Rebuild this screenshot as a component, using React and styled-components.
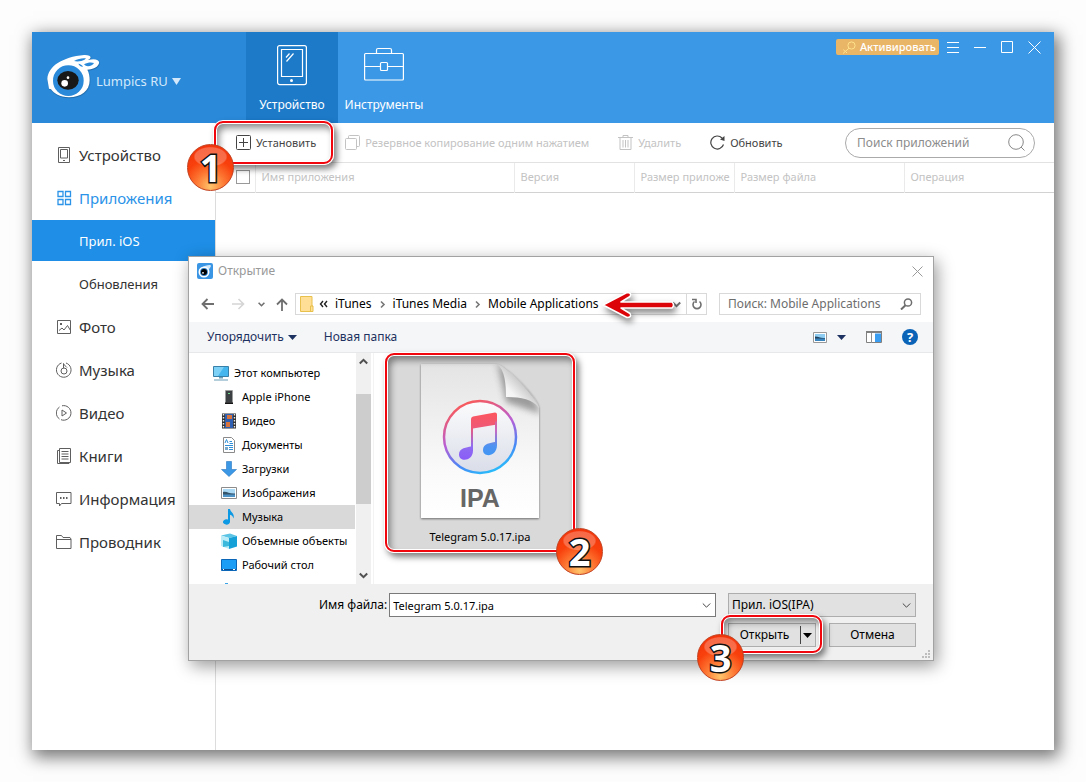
import React, { useState } from 'react'
import styled, { createGlobalStyle, css } from 'styled-components'

const GlobalStyle = createGlobalStyle`
 * {
  box-sizing: border-box;
 }
 body {
  margin: 0;
  background: #fdfdfd;
  font-family: 'Noto Sans', 'Open Sans', sans-serif;
  font-size: 12px;
  line-height: 16px;
 }
 button, input, select {
  font: inherit;
  color: inherit;
  margin: 0;
  padding: 0;
  border: none;
  border-radius: 0;
  background: none;
  outline: none;
 }
 svg {
  display: block;
  flex: none;
 }
`

const Page = styled.div`
 padding: 32px;
`

const Window = styled.div`
 position: relative;
 display: flex;
 flex-direction: column;
 min-height: calc(100vh - 64px);
 background: #fff;
 box-shadow: 3px 5px 16px 2px rgba(0, 0, 0, 0.55);
`

const Header = styled.header`
 display: flex;
 height: 91px;
 background: #3b98e6;
 color: #fff;
`

const Brand = styled.button`
 display: flex;
 align-items: center;
 width: 214px;
 padding-left: 14px;
 background: #2a89d9;
 color: #d3e8fa;
 font-size: 13px;

 span {
  margin-top: 7px;
  margin-left: -4px;
 }
 svg + span + svg {
  margin: 7px 0 0 4px;
 }
`

const Tab = styled.button`
 display: flex;
 flex-direction: column;
 align-items: center;
 justify-content: space-between;
 width: 92px;
 padding: 12px 0 9px;
 line-height: 18px;
 white-space: nowrap;
 background: ${(props) => (props.$active ? '#1c7ac9' : 'transparent')};
`

const WindowControls = styled.div`
 display: flex;
 align-items: center;
 gap: 14px;
 height: 30px;
 margin-left: auto;
 padding-right: 13px;
`

const ActivateButton = styled.button`
 display: flex;
 align-items: center;
 gap: 4px;
 height: 16px;
 margin-right: -6px;
 padding: 0 3px 0 6px;
 border-radius: 2px;
 background: #e9b567;
 font-size: 11px;
 font-weight: 500;
 line-height: 14px;
 white-space: nowrap;
`

const Body = styled.div`
 display: flex;
 flex: 1;
`

const Sidebar = styled.nav`
 display: flex;
 flex-direction: column;
 gap: 2px;
 width: 184px;
 padding-top: 11px;
 border-right: 1px solid #dcdcdc;
`

const SideLink = styled.a`
 display: flex;
 align-items: center;
 gap: 7px;
 height: 41px;
 padding-left: 24px;
 font-size: 15px;
 color: #333;
 text-decoration: none;
 white-space: nowrap;

 svg {
  color: #5f5f5f;
 }

 ${(props) =>
  props.$open &&
  css`
   &,
   svg {
    color: #2b93e8;
   }
  `}
 ${(props) =>
  props.$sub &&
  css`
   padding-left: 47px;
   font-size: 13px;
  `}
 ${(props) =>
  props.$active &&
  css`
   background: #1e8ee6;
   color: #fff;
  `}
`

const Main = styled.main`
 flex: 1;
 min-width: 0;
`

const Toolbar = styled.div`
 display: flex;
 align-items: center;
 gap: 29px;
 height: 40px;
 padding: 0 19px 0 20px;
 border-bottom: 1px solid #e2e2e2;
`

const ToolButton = styled.button`
 position: relative;
 display: flex;
 align-items: center;
 gap: 5px;
 color: #444;
 font-size: 11px;
 white-space: nowrap;

 &:disabled {
  color: #c3c3c3;
 }
`

const AppSearch = styled.label`
 display: flex;
 align-items: center;
 width: 190px;
 height: 30px;
 margin-left: auto;
 padding: 0 9px 0 11px;
 border: 1px solid #aaa;
 border-radius: 15px;
 color: #888;

 input {
  flex: 1;
  min-width: 0;
 }
 input::placeholder {
  color: #8c8c8c;
  opacity: 1;
 }
`

const AppTable = styled.table`
 width: 100%;
 table-layout: fixed;
 border-collapse: collapse;
 border-bottom: 1px solid #d2d2d2;
 color: #c3c3c3;
 font-size: 11px;
`

const HeadCell = styled.th`
 width: ${(props) => props.$width || 'auto'};
 height: 29px;
 padding: 0 0 0 6px;
 border-left: 1px solid #eaeaea;
 font-weight: 400;
 text-align: left;
 white-space: nowrap;

 &:first-child {
  padding-left: 20px;
  border-left: none;
 }
`

const Checkbox = styled.input`
 display: block;
 appearance: none;
 width: 14px;
 height: 14px;
 border: 1px solid #999;
`

/* file dialog */

const Dialog = styled.section`
 position: absolute;
 z-index: 2;
 top: 224px;
 left: 156px;
 right: 120px;
 border: 1px solid #a2a2a2;
 background: #fff;
 color: #000;
 box-shadow: 3px 5px 16px rgba(0, 0, 0, 0.4);
`

const TitleBar = styled.div`
 display: flex;
 align-items: center;
 gap: 5px;
 height: 28px;
 padding: 0 10px 0 8px;
 color: #999;

 button {
  margin-left: auto;
 }
`

const NavRow = styled.div`
 display: flex;
 height: 37px;
 padding: 8px 12px 7px 4px;
`

const NavButton = styled.button`
 display: flex;
 align-items: center;
 justify-content: center;
 width: ${(props) => props.$width};
 color: #6f6f6f;

 &:disabled {
  color: #d5d5d5;
 }
`

const AddressBar = styled.div`
 display: flex;
 align-items: center;
 flex: 1;
 min-width: 0;
 padding-left: 4px;
 border: 1px solid #d9d9d9;
 white-space: nowrap;
`

const Crumbs = styled.div`
 position: relative;
 display: flex;
 align-items: center;
 gap: 7px;
 margin-right: auto;
 padding-left: 5px;

 a {
  color: #000;
  text-decoration: none;
 }
`

const PointerArrow = styled.svg`
 position: absolute;
 top: -5px;
 left: 100%;
 margin-left: 2px;
 filter: drop-shadow(2px 4px 3px rgba(0, 0, 0, 0.5));
`

const RefreshButton = styled(NavButton)`
 height: 20px;
 border-left: 1px solid #d9d9d9;
`

const FileSearch = styled.label`
 display: flex;
 align-items: center;
 width: 202px;
 margin-left: 12px;
 padding: 0 7px 0 8px;
 border: 1px solid #d9d9d9;
 color: #6d6d6d;

 input {
  flex: 1;
  min-width: 0;
 }
 input::placeholder {
  color: #6d6d6d;
  opacity: 1;
 }
`

const CommandBar = styled.div`
 display: flex;
 align-items: center;
 height: 31px;
 padding: 0 15px 0 18px;
 border-bottom: 1px solid #e6e8ea;
 background: #f5f6f7;
 color: #1e3261;
`

const Command = styled.button`
 display: flex;
 align-items: center;
 gap: 4px;
 margin-right: 27px;
`

const ViewTools = styled.div`
 display: flex;
 align-items: center;
 gap: 20px;
 margin-left: auto;
`

const ViewButton = styled.button`
 display: flex;
 align-items: center;
 gap: 10px;
`

const Browser = styled.div`
 display: flex;
 height: 231px;
`

const Tree = styled.ul`
 width: 166px;
 margin: 0 1px 0 0;
 padding: 8px 0 0;
 overflow: hidden;
 list-style: none;
 font-size: 11px;
`

const TreeItem = styled.li`
 display: flex;
 align-items: center;
 gap: 5px;
 height: 24px;
 padding-left: ${(props) => (props.$root ? '24px' : '32px')};
 background: ${(props) => (props.$selected ? '#d9d9d9' : 'transparent')};
 white-space: nowrap;
`

const Scrollbar = styled.div`
 display: flex;
 flex-direction: column;
 align-items: center;
 width: 15px;
 padding: 5px 0;
 background: #f0f0f0;
 color: #505050;
`

const Thumb = styled.div`
 width: 100%;
 height: 110px;
 margin: 29px 0 auto;
 background: #cdcdcd;
`

const FileList = styled.div`
 flex: 1;
 margin-left: 2px;
 padding: 3px 0 0 14px;
 border-left: 1px solid #f3f3f3;
`

const FileTile = styled.button`
 position: relative;
 display: flex;
 flex-direction: column;
 align-items: center;
 gap: 7px;
 width: 184px;
 height: 193px;
 padding-top: 6px;
 background: #d9d9d9;
 font-size: 11px;
`

const Footer = styled.form`
 display: flex;
 flex-direction: column;
 gap: 6px;
 position: relative;
 height: 76px;
 padding: 9px 17px 13px 130px;
 background: #f0f0f0;
`

const FooterRow = styled.div`
 display: flex;
 align-items: center;
 justify-content: flex-end;
 height: 24px;
`

const Field = styled.div`
 display: flex;
 align-items: center;
 gap: 2px;
 height: 24px;
 padding-right: 4px;
 border: 1px solid #7a7a7a;
 background: #fff;

 input, select {
  flex: 1;
  min-width: 0;
  height: 100%;
  padding-left: 3px;
  appearance: none;
 }
`

const NameField = styled(Field)`
 flex: 1;
 margin: 0 12px 0 2px;
 font-size: 11px;
`

const TypeField = styled(Field)`
 width: 188px;
 border-color: #adadad;
 background: #e1e1e1;
`

const DialogButton = styled.button`
 height: 24px;
 width: 87px;
 border: 1px solid #adadad;
 background: #e1e1e1;
`

const SplitButton = styled.div`
 position: relative;
 display: flex;
 width: 88px;
 height: 24px;
 margin-right: 13px;
 border: 1px solid #adadad;
 background: #e1e1e1;

 button:first-child {
  flex: 1;
  margin: 2px 0;
  border-right: 1px solid #444;
 }
 button + button {
  width: 14px;
  padding-left: 2px;
 }
`

const Grip = styled.svg`
 position: absolute;
 right: 2px;
 bottom: 1px;
`

/* callouts */

const Callout = styled.span`
 position: absolute;
 z-index: 3;
 inset: ${(props) => props.$inset};
 border: 2px solid #fff;
 border-radius: 10px;
 box-shadow: 3px 4px 6px rgba(0, 0, 0, 0.5);
 pointer-events: none;

 &::before {
  content: '';
  position: absolute;
  inset: -1px;
  border: 2px solid #f0060c;
  border-radius: 9px;
  box-shadow: inset 0 0 0 1px #fff, inset 3px 5px 7px rgba(0, 0, 0, 0.45);
 }
`

const Badge = styled.b`
 position: absolute;
 left: ${(props) => props.$left};
 bottom: ${(props) => props.$bottom};
 width: 47px;
 height: 47px;
 border: 1px solid #c2401f;
 border-radius: 50%;
 background:
  radial-gradient(ellipse 17px 10px at 50% 26%, rgba(255, 255, 255, 0.25) 90%, transparent),
  radial-gradient(circle at 50% 92%, #ffc56b 0, #fd7a35 30%, #f8400c 58%, #f2300a 100%);
 color: #fff;
 font-size: 38px;
 line-height: 44px;
 text-align: center;
 -webkit-text-stroke: 3px #111;
 paint-order: stroke fill;
`

const Stroke = ({ size = 16, width, height, children, ...rest }) => (
 <svg
  width={width || size}
  height={height || size}
  viewBox={`0 0 ${width || size} ${height || size}`}
  fill="none"
  stroke="currentColor"
  {...rest}
 >
  {children}
 </svg>
)

const Caret = () => (
 <svg width="9" height="5" viewBox="0 0 9 5" fill="currentColor">
  <path d="M0 0h9L4.500 5z" />
 </svg>
)

const Chevron = ({ up, bold }) => (
 <Stroke width={9} height={7} strokeWidth={bold ? 2 : 1} color={bold ? undefined : '#444'}>
  <path d={up ? 'M.8 5.500L4.500 1.800l3.700 3.700' : 'M.8 1.500L4.500 5.200l3.700-3.700'} />
 </Stroke>
)

const Separator = () => (
 <Stroke width={7} height={9} strokeWidth={1.6} color="#777">
  <path d="M2 1.500l3 3-3 3" />
 </Stroke>
)

const Logo = () => (
 <svg width="54" height="46" viewBox="6 28 162 138">
  <g style={{ filter: 'drop-shadow(1px 2px 1px rgba(0,0,0,.3))' }}>
   <path
    d="M10 100C12 62 55 34 120 28c22-1 25 9 12 15 24-6 38 1 32 13-6 11-20 16-34 16 5 9 7 20 7 32 0 32-26 51-62 51-28 0-45-12-54-24l-6-2z"
    fill="#fff"
   />
  </g>
  <path d="M90 46c12-7 24-9 35-8 2 2-4 6-13 8-8 2-15 2-22 0z" fill="#2a89d9" />
  <path d="M120 56c11-6 22-7 30-4-2 5-11 9-18 10-5 0-9-2-12-6z" fill="#2a89d9" />
  <path d="M103 54c6 0 11 4 14 9-5 1-11-2-14-9z" fill="#2a89d9" />
  <circle cx="73" cy="105" r="46" fill="#2a89d9" />
  <ellipse cx="72" cy="104" rx="32" ry="28" fill="#181818" />
  <circle cx="62" cy="113" r="10" fill="#fff" />
  <circle cx="72" cy="96" r="4" fill="#fff" />
 </svg>
)

const MiniLogo = () => (
 <svg width="16" height="16" viewBox="0 0 16 16">
  <rect width="16" height="16" rx="2" fill="#3a95e4" />
  <path d="M2 9C2 5 7 2.500 12.500 2c2 0 1.500 1.500 1 2-.5 1.500-2 2-2.500 2.500z" fill="#cfe8fb" />
  <circle cx="7" cy="9" r="5.500" fill="#fff" />
  <circle cx="7" cy="9" r="3.900" fill="#2d7fc8" />
  <circle cx="7" cy="9" r="3" fill="#000" />
  <circle cx="6" cy="9.800" r=".9" fill="#fff" />
 </svg>
)

const TabletIcon = () => (
 <Stroke width={30} height={42} strokeWidth={1.2}>
  <rect x=".6" y="1.600" width="28.800" height="39" rx="2" />
  <path d="M4.500 5.500h21v27h-21zM9 13.500l3.500-4M9.500 17.500l7-8" />
  <circle cx="14.500" cy="36.500" r="1.500" fill="currentColor" stroke="none" />
 </Stroke>
)

const BriefcaseIcon = () => (
 <Stroke width={40} height={42} strokeWidth={1.2}>
  <rect x=".6" y="9.500" width="38.800" height="26.500" rx="1" />
  <path d="M12.500 9.500V6q0-1.500 1.500-1.500h12q1.500 0 1.500 1.500v3.500M.6 22.500h15.900M23.500 22.500h15.900" />
  <rect x="16.500" y="18.500" width="7" height="8" rx="1" />
 </Stroke>
)

const KeyIcon = () => (
 <Stroke width={14} height={13} color="#ffe38c">
  <circle cx="9.500" cy="4.500" r="3.600" />
  <path d="M7 7.200L1 12.500M3.500 10.500l1.500 1.500M1.500 8.500l1.500 2" />
 </Stroke>
)

const sideIcons = {
 device: (
  <Stroke>
   <path d="M2.500.5h11v15h-11zM4.500 2.500h7v8.500h-7zM7 13.500h2" />
  </Stroke>
 ),
 apps: (
  <Stroke strokeWidth="1.300">
   <path d="M2 1.500h5v5H2zM9.500 1.500h5v5h-5zM2 9.500h5v5H2zM9.500 9.500h5v5h-5z" />
  </Stroke>
 ),
 photo: (
  <Stroke>
   <path d="M1.500 1.500h13v13h-13zM3 11.500l3-2.500 2 2 3.500-4.500 3 5" />
   <path d="M4 5h2" strokeWidth="2" />
  </Stroke>
 ),
 music: (
  <Stroke>
   <path d="M5.500 1A7.300 7.300 0 1 0 10 1" />
   <circle cx="8" cy="9" r="3" />
   <path d="M7.500 6V1.500c.5 2 2.500 2.500 3.500 4" />
  </Stroke>
 ),
 video: (
  <Stroke>
   <path d="M6 .8A7.300 7.300 0 1 1 5 14.700M3.500 14A7.300 7.300 0 0 1 3.500 2M6 5v6l4.500-3z" />
  </Stroke>
 ),
 books: (
  <Stroke>
   <path d="M3.500.5h11v14h-11zM3.500 2.500h-2v13h11.500v-1M5.500 3.500h7M5.500 6h7M5.500 8.500h7M5.500 11h7" />
  </Stroke>
 ),
 info: (
  <Stroke>
   <path d="M.5 1.500h14.500v11H5.500l-2 2.500v-2.500h-3z" />
   <path d="M4 7h1.500M7 7h1.500M10 7h1.500" strokeWidth="1.800" />
  </Stroke>
 ),
 explorer: (
  <Stroke>
   <path d="M.5 14.500v-13h5l1.500 2h7l1 1.500v9.500zM.5 5.500h14.500" />
  </Stroke>
 ),
}

const treeIcons = {
 computer: (
  <svg width="16" height="16" viewBox="0 0 16 16">
   <path d="M.5 1.500h15v10H.5z" fill="#45b6ee" stroke="#3980a8" />
   <path d="M1 2h10l-6 9H1z" fill="#7dd1f7" />
   <path d="M6 12h4v1.500H6zM1 14.500h14v1H1z" fill="#6aa0b8" />
  </svg>
 ),
 phone: (
  <svg width="16" height="16" viewBox="0 0 16 16">
   <path d="M4.500 1.500h7V14h-7z" fill="#3d4043" stroke="#999" strokeWidth=".6" />
   <path d="M4 13.500h8V15H4z" fill="#151515" />
   <path d="M7 4h2v1H7z" fill="#6fdc8a" />
  </svg>
 ),
 video: (
  <svg width="16" height="16" viewBox="0 0 16 16">
   <path d="M1 .5h14v15H1z" fill="#333" />
   <path d="M4 1h8v14H4z" fill="#2e5fb0" />
   <path d="M6 2h5v4H6zM5 9h4v5H5z" fill="#d8743c" />
   <path d="M2.500 1v15M13.500 1v15" stroke="#eee" strokeWidth="1.400" strokeDasharray="1.500 1.500" />
  </svg>
 ),
 documents: (
  <svg width="16" height="16" viewBox="0 0 16 16">
   <path d="M2.500.5h8l3 3v12h-11z" fill="#fff" stroke="#8a8a8a" />
   <path d="M4 6l1.500-3.500L7 6M8.500 4.500H11M8.500 6.500H12M4 8.500h8M8 10.500h4M8 12.500h4" stroke="#2e8fd8" fill="none" />
   <path d="M4 10h3v3H4z" fill="#77aacc" />
  </svg>
 ),
 downloads: (
  <svg width="16" height="16" viewBox="0 0 16 16">
   <path d="M5.500.5h5v8h5L8 15.500.5 8.500h5z" fill="#3c97e5" stroke="#2877c0" strokeWidth=".6" />
  </svg>
 ),
 pictures: (
  <svg width="16" height="12" viewBox="0 0 16 12">
   <path d="M.5.500h15v11H.5z" fill="#fff" stroke="#8c8c8c" />
   <path d="M2 2h12v8H2z" fill="#a9d9f5" />
   <path d="M2 5c4-1 6 2 12 1.500V8H2z" fill="#35556b" />
   <path d="M2 7.500h12V10H2z" fill="#4d93c5" />
  </svg>
 ),
 music: (
  <svg width="16" height="16" viewBox="0 0 16 16">
   <path d="M7 0h2c.5 3.500 5 4 3.500 9.500-.5-2-1.500-3.200-3.500-3.800V13a3.500 2.700 0 1 1-2-2.500z" fill="#0d99e3" />
  </svg>
 ),
 objects: (
  <svg width="16" height="16" viewBox="0 0 16 16">
   <path d="M0 2.500L9 .5l7 2.500-8 2z" fill="#5cc4e4" />
   <path d="M0 2.500L8 5v11l-8-3z" fill="#b9ecf7" />
   <path d="M8 5l8-2v10.500L8 16z" fill="#16a0d8" />
   <path d="M2 7l6 2v4l-6 1z" fill="#3bb9dc" />
  </svg>
 ),
 desktop: (
  <svg width="16" height="12" viewBox="0 0 16 12">
   <path d="M.5.5h15v11H.5z" fill="#1b9df5" stroke="#0b66b8" />
   <path d="M1 10h14v1H1z" fill="#0a4d90" />
   <path d="M2 10h1v1H2zM12 10h2v1h-2z" fill="#fff" />
  </svg>
 ),
 disk: (
  <svg width="16" height="16" viewBox="0 0 16 16">
   <path d="M4 2h3v3H4z" fill="#3ba4e8" />
   <path d="M1 6h14v6H1z" fill="#9b9b9b" />
  </svg>
 ),
}

const PictureIcon = () => (
 <svg width="14" height="11" viewBox="0 0 14 11">
  <path d="M.5.500h13v10H.5z" fill="#fff" stroke="#999" />
  <path d="M2 2h10v7H2z" fill="#8fcdf2" />
  <path d="M2 4.500c4 0 5 2 10 1.500v1H2z" fill="#23435f" />
  <path d="M2 6.500h10V9H2z" fill="#3a84bd" />
 </svg>
)

const PreviewIcon = () => (
 <svg width="16" height="12" viewBox="0 0 16 12">
  <path d="M.5.500h15v11H.5z" fill="#fff" stroke="#808080" />
  <path d="M0 0h16v2H0z" fill="#808080" />
  <path d="M5.500 2v10" stroke="#909090" />
  <path d="M9 2.500h6V11H9z" fill="#3a9df0" />
 </svg>
)

const HelpIcon = () => (
 <svg width="16" height="16" viewBox="0 0 16 16">
  <circle cx="8" cy="8" r="8" fill="#0b63b8" />
  <text x="8" y="12.500" fill="#fff" fontSize="13" fontWeight="700" textAnchor="middle">
   ?
  </text>
 </svg>
)

const IpaIcon = () => (
 <svg width="122" height="160" viewBox="0 0 122 160">
  <defs>
   <linearGradient id="paper" x1="0" y1="0" x2="0" y2="1">
    <stop offset="0" stopColor="#e4e4e4" />
    <stop offset=".7" stopColor="#fafafa" />
    <stop offset="1" stopColor="#fff" />
   </linearGradient>
   <linearGradient id="ring" x1=".3" y1="0" x2=".7" y2="1">
    <stop offset="0" stopColor="#fb5a55" />
    <stop offset=".45" stopColor="#b75fd6" />
    <stop offset=".75" stopColor="#4a86f5" />
    <stop offset="1" stopColor="#25c0fb" />
   </linearGradient>
   <linearGradient id="note" gradientUnits="userSpaceOnUse" x1="62" y1="52" x2="62" y2="98">
    <stop offset="0" stopColor="#fb5660" />
    <stop offset=".3" stopColor="#ee5a78" />
    <stop offset=".7" stopColor="#8f6cf0" />
    <stop offset="1" stopColor="#8a5cf8" />
   </linearGradient>
   <linearGradient id="noteRight" gradientUnits="userSpaceOnUse" x1="72" y1="52" x2="72" y2="94">
    <stop offset="0" stopColor="#e6607c" />
    <stop offset=".4" stopColor="#c46ac4" />
    <stop offset=".75" stopColor="#4f92f0" />
    <stop offset="1" stopColor="#3f97f5" />
   </linearGradient>
   <linearGradient id="disc" x1="0" y1="0" x2="0" y2="1">
    <stop offset="0" stopColor="#fcfcfd" />
    <stop offset="1" stopColor="#d9dde8" />
   </linearGradient>
   <linearGradient id="curl" x1="0" y1="1" x2=".7" y2=".3">
    <stop offset="0" stopColor="#fff" />
    <stop offset=".5" stopColor="#f4f4f4" />
    <stop offset="1" stopColor="#b4b4b4" />
   </linearGradient>
   <filter id="soft" x="-20%" y="-20%" width="150%" height="150%">
    <feGaussianBlur stdDeviation="3" />
   </filter>
   <clipPath id="sheet">
    <path d="M2 2h76c10 2 42 34 42 44v110H2z" />
   </clipPath>
  </defs>
  <path
   d="M2 2h76c10 2 42 34 42 44v110H2z"
   fill="url(#paper)"
   style={{ filter: 'drop-shadow(0 1px 1px rgba(0,0,0,.5))' }}
  />
  <g clipPath="url(#sheet)">
   <path d="M78 0l9 40 35 12-10-22z" fill="#666" opacity=".6" filter="url(#soft)" />
  </g>
  <path d="M78 2c8 6 9 20 9 33 13 0 27 2 33 11-3-10-32-42-42-44z" fill="url(#curl)" />
  <circle cx="61" cy="75" r="36" fill="url(#disc)" stroke="url(#ring)" strokeWidth="2.500" />
  <path
   d="M52 57q0-2 2-2.500l22-4q2 0 2 2v10l-24 4v22c0 11-14 12-14 4 0-7 8-7 12-8z"
   fill="url(#note)"
  />
  <path d="M76 60l2-1v24c0 12-14 13-14 5 0-7 8-7 12-8z" fill="url(#noteRight)" />
  <text
   x="61"
   y="145"
   fill="#666"
   fontFamily="Liberation Sans, sans-serif"
   fontSize="25"
   fontWeight="700"
   textAnchor="middle"
  >
   IPA
  </text>
 </svg>
)

const menu = [
 { id: 'device', label: 'Устройство' },
 { id: 'apps', label: 'Приложения', open: true },
 { id: 'ios', label: 'Прил. iOS', sub: true, active: true },
 { id: 'updates', label: 'Обновления', sub: true },
 { id: 'photo', label: 'Фото' },
 { id: 'music', label: 'Музыка' },
 { id: 'video', label: 'Видео' },
 { id: 'books', label: 'Книги' },
 { id: 'info', label: 'Информация' },
 { id: 'explorer', label: 'Проводник' },
]

const places = [
 ['computer', 'Этот компьютер'],
 ['phone', 'Apple iPhone'],
 ['video', 'Видео'],
 ['documents', 'Документы'],
 ['downloads', 'Загрузки'],
 ['pictures', 'Изображения'],
 ['music', 'Музыка'],
 ['objects', 'Объемные объекты'],
 ['desktop', 'Рабочий стол'],
 ['disk', ''],
]

const OpenDialog = () => {
 const [fileName, setFileName] = useState('Telegram 5.0.17.ipa')

 return (
  <Dialog role="dialog" aria-label="Открытие">
   <TitleBar>
    <MiniLogo />
    <span>Открытие</span>
    <button aria-label="Закрыть">
     <Stroke size={11}>
      <path d="M.5.5l10 10M10.500.5l-10 10" />
     </Stroke>
    </button>
   </TitleBar>
   <NavRow>
    <NavButton $width="30px" aria-label="Назад">
     <Stroke width={14} height={12} strokeWidth={1.8}>
      <path d="M13 6H1.500M6.500 1l-5 5 5 5" />
     </Stroke>
    </NavButton>
    <NavButton $width="30px" aria-label="Вперед" disabled>
     <Stroke width={14} height={12} strokeWidth={1.6}>
      <path d="M1 6h11.500M7.500 1l5 5-5 5" />
     </Stroke>
    </NavButton>
    <NavButton $width="16px" aria-label="Последние">
     <Stroke width={7} height={5} strokeWidth={1.6}>
      <path d="M.6.8l2.900 2.900L6.400.8" />
     </Stroke>
    </NavButton>
    <NavButton $width="26px" aria-label="Вверх">
     <Stroke width={12} height={13} strokeWidth={1.8}>
      <path d="M6 13V1.500M1 6.500l5-5 5 5" />
     </Stroke>
    </NavButton>
    <AddressBar>
     <svg width="14" height="16" viewBox="0 0 14 16">
      <path d="M.5.500h11.500v9.500h1v5.500H.5z" fill="#ffdf95" stroke="#e8c04c" />
      <path d="M10.500 15.500v-5.500h2.500" fill="none" stroke="#e8c04c" />
     </svg>
     <Crumbs>
      <Stroke width={9} height={8} strokeWidth={1.4} color="#222">
       <path d="M4 1L1.500 4 4 7M8 1L5.500 4 8 7" />
      </Stroke>
      <a href="#itunes">iTunes</a>
      <Separator />
      <a href="#media">iTunes Media</a>
      <Separator />
      <a href="#apps">Mobile Applications</a>
      <PointerArrow width="74" height="28" viewBox="0 0 74 28">
       <path
        d="M2 14L26 1.500q5 0 3 4L20 11h51q3 3 0 6H20l9 5.500q2 4-3 4z"
        fill="#dc0409"
        stroke="#fff"
        strokeWidth="1.500"
        strokeLinejoin="round"
       />
      </PointerArrow>
     </Crumbs>
     <NavButton $width="20px" aria-label="Показать путь">
      <Chevron bold />
     </NavButton>
     <RefreshButton $width="20px" aria-label="Обновить папку">
      <Stroke width={10} height={12} strokeWidth={1.6}>
       <path d="M2.500 3.500A4 4 0 1 0 7.500 3.500M0 1.500h4v3.500" />
      </Stroke>
     </RefreshButton>
    </AddressBar>
    <FileSearch>
     <input type="text" placeholder="Поиск: Mobile Applications" aria-label="Поиск: Mobile Applications" />
     <Stroke width={13} height={12} strokeWidth={1.5}>
      <circle cx="8" cy="4.500" r="3.600" />
      <path d="M5.500 7.200L1 11.500" strokeWidth="2" />
     </Stroke>
    </FileSearch>
   </NavRow>
   <CommandBar>
    <Command>
     Упорядочить <Caret />
    </Command>
    <Command>Новая папка</Command>
    <ViewTools>
     <ViewButton aria-label="Вид">
      <PictureIcon />
      <Caret />
     </ViewButton>
     <ViewButton aria-label="Область просмотра">
      <PreviewIcon />
     </ViewButton>
     <ViewButton aria-label="Справка">
      <HelpIcon />
     </ViewButton>
    </ViewTools>
   </CommandBar>
   <Browser>
    <Tree>
     {places.map(([icon, label], index) => (
      <TreeItem key={icon} $root={index === 0} $selected={icon === 'music'}>
       {treeIcons[icon]}
       {label}
      </TreeItem>
     ))}
    </Tree>
    <Scrollbar>
     <Chevron up bold />
     <Thumb />
     <Chevron bold />
    </Scrollbar>
    <FileList>
     <FileTile>
      <IpaIcon />
      Telegram 5.0.17.ipa
      <Callout $inset="-4px">
       <Badge $left="170px" $bottom="-24px">
        2
       </Badge>
      </Callout>
     </FileTile>
    </FileList>
   </Browser>
   <Footer onSubmit={(e) => e.preventDefault()}>
    <FooterRow>
     <label htmlFor="file-name">Имя файла:</label>
     <NameField>
      <input id="file-name" type="text" value={fileName} onChange={(e) => setFileName(e.target.value)} />
      <Chevron />
     </NameField>
     <TypeField>
      <select aria-label="Тип файла">
       <option>Прил. iOS(IPA)</option>
      </select>
      <Chevron />
     </TypeField>
    </FooterRow>
    <FooterRow>
     <SplitButton>
      <button type="submit">Открыть</button>
      <button type="button" aria-label="Варианты открытия">
       <Caret />
      </button>
      <Callout $inset="-10px -8px -8px -9px">
       <Badge $left="-25px" $bottom="-29px">
        3
       </Badge>
      </Callout>
     </SplitButton>
     <DialogButton type="button">Отмена</DialogButton>
    </FooterRow>
    <Grip width="9" height="9" viewBox="0 0 9 9" fill="#bdbdbd">
     <path d="M6 0h2v2H6zM3 3h2v2H3zM6 3h2v2H6zM0 6h2v2H0zM3 6h2v2H3zM6 6h2v2H6z" />
    </Grip>
   </Footer>
  </Dialog>
 )
}

const App = () => {
 return (
  <Page>
   <GlobalStyle />
   <Window>
    <Header>
     <Brand>
      <Logo />
      <span>Lumpics RU</span>
      <svg width="9" height="7" viewBox="0 0 9 7" fill="currentColor">
       <path d="M0 0h9L4.500 7z" />
      </svg>
     </Brand>
     <Tab $active>
      <TabletIcon />
      Устройство
     </Tab>
     <Tab>
      <BriefcaseIcon />
      Инструменты
     </Tab>
     <WindowControls>
      <ActivateButton>
       <KeyIcon />
       Активировать
      </ActivateButton>
      <button aria-label="Меню">
       <Stroke size={13}>
        <path d="M0 1.500h12M0 6.500h12M0 11.500h12" />
       </Stroke>
      </button>
      <button aria-label="Свернуть">
       <Stroke size={13}>
        <path d="M0 6.500h12" />
       </Stroke>
      </button>
      <button aria-label="Развернуть">
       <Stroke size={13}>
        <path d="M.5.500h11v11H.5z" />
       </Stroke>
      </button>
      <button aria-label="Закрыть">
       <Stroke size={13}>
        <path d="M.5.5l12 12M12.500.5l-12 12" />
       </Stroke>
      </button>
     </WindowControls>
    </Header>
    <Body>
     <Sidebar>
      {menu.map((item) => (
       <SideLink key={item.id} href={`#${item.id}`} $open={item.open} $sub={item.sub} $active={item.active}>
        {sideIcons[item.id]}
        {item.label}
       </SideLink>
      ))}
     </Sidebar>
     <Main>
      <Toolbar>
       <ToolButton>
        <Stroke size={15}>
         <rect x=".5" y=".5" width="14" height="14" rx="1" />
         <path d="M3 7.500h9M7.500 3v9" />
        </Stroke>
        Установить
        <Callout $inset="-15px -18px -14px -23px">
         <Badge $left="-28px" $bottom="-28px">
          1
         </Badge>
        </Callout>
       </ToolButton>
       <ToolButton disabled>
        <Stroke size={15}>
         <path d="M1.500 3.500h9q1 0 1 1v9q0 1-1 1h-9q-1 0-1-1v-9q0-1 1-1zM3.500 3.500v-2q0-1 1-1h9q1 0 1 1v9q0 1-1 1h-2" />
        </Stroke>
        Резервное копирование одним нажатием
       </ToolButton>
       <ToolButton disabled>
        <Stroke size={15}>
         <path d="M0 2.500h15M5 2.500v-2h5v2M2 2.500v12h11v-12M5 5v7.500M7.500 5v7.500M10 5v7.500" />
        </Stroke>
        Удалить
       </ToolButton>
       <ToolButton>
        <Stroke size={15} strokeWidth={1.2}>
         <path d="M13.500 9.500A6.500 6.500 0 1 1 12 3" />
         <path d="M10 4.500l4.500-3.500v5z" fill="currentColor" stroke="none" />
        </Stroke>
        Обновить
       </ToolButton>
       <AppSearch>
        <input type="text" placeholder="Поиск приложений" aria-label="Поиск приложений" />
        <Stroke size={17}>
         <circle cx="8" cy="8" r="7.300" />
         <path d="M13 13l3.500 3.500" />
        </Stroke>
       </AppSearch>
      </Toolbar>
      <AppTable>
       <thead>
        <tr>
         <HeadCell $width="39px">
          <Checkbox type="checkbox" aria-label="Выбрать все" />
         </HeadCell>
         <HeadCell>Имя приложения</HeadCell>
         <HeadCell $width="120px">Версия</HeadCell>
         <HeadCell $width="100px">Размер приложе</HeadCell>
         <HeadCell $width="170px">Размер файла</HeadCell>
         <HeadCell $width="150px">Операция</HeadCell>
        </tr>
       </thead>
      </AppTable>
     </Main>
    </Body>
    <OpenDialog />
   </Window>
  </Page>
 )
}

export default App
